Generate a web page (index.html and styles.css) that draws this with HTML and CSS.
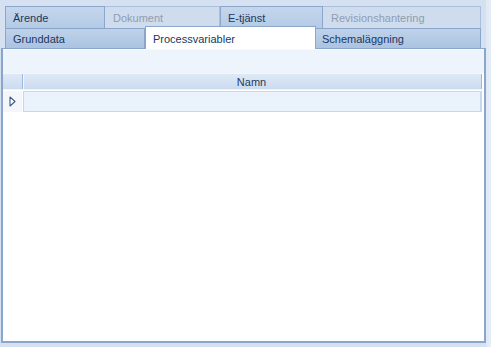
FILE: index.html
```html
<!DOCTYPE html>
<html lang="sv">
<head>
<meta charset="utf-8">
<link rel="stylesheet" href="styles.css">
</head>
<body>
<div class="window">
  <div class="tabs">
    <div class="tabrow row1">
      <div class="tab active w-arende">Ärende</div>
      <div class="tab disabled w-dok">Dokument</div>
      <div class="tab active w-etj">E-tjänst</div>
      <div class="tab disabled w-rev">Revisionshantering</div>
    </div>
    <div class="tabrow row2">
      <div class="tab tab2 w-grund">Grunddata</div>
      <div class="tab selected w-proc">Processvariabler</div>
      <div class="tab tab2 w-schema">Schemaläggning</div>
    </div>
  </div>
  <div class="panel">
    <div class="toolbar"></div>
    <div class="grid">
      <div class="grid-header">
        <div class="ind-head"></div>
        <div class="col-head">Namn</div>
      </div>
      <div class="grid-row">
        <div class="ind-cell">
          <svg class="tri" width="7" height="11" viewBox="0 0 7 11"><polygon points="1,1 1,10 6,5.5" fill="#ffffff" stroke="#3d5a82" stroke-width="1.1" stroke-linejoin="round"/></svg>
        </div>
        <div class="cell"></div>
      </div>
    </div>
  </div>
</div>
</body>
</html>
```

FILE: styles.css
```css
html, body {
  margin: 0;
  padding: 0;
}
body {
  background: #d5e1f1;
  font-family: "Liberation Sans", Arial, sans-serif;
  font-size: 11px;
  color: #1c3761;
  width: 491px;
  height: 347px;
  overflow: hidden;
}
.window {
  width: 491px;
  height: 347px;
  box-sizing: border-box;
  background: linear-gradient(to right, #d5e1f1 0, #d5e1f1 486px, #dfe8f5 486px, #e6eef8 491px);
}
.tabs {
  padding: 6px 0 0 5px;
}
.tabrow {
  display: flex;
}
.row1 {
  height: 22px;
}
.row2 {
  height: 20px;
}
.tab {
  box-sizing: border-box;
  display: flex;
  align-items: center;
  padding-left: 7px;
  border: 1px solid #8ea9cb;
  border-bottom: none;
  white-space: nowrap;
}
.row1 .tab {
  height: 22px;
}
.active {
  background: linear-gradient(#c4d6ec, #b4cae5);
  border-color: #8aa6ca;
  color: #1c3761;
}
.disabled {
  background: #cedcee;
  border-color: #a9bfdc;
  color: #8e9db2;
}
.tab2 {
  height: 20px;
  background: linear-gradient(#bfd2ea, #abc3e1);
  border-color: #8aa6ca;
}
.selected {
  height: 23px;
  margin-top: -2px;
  background: #ffffff;
  border-color: #8aa6ca;
  padding-top: 2px;
  position: relative;
  z-index: 2;
}
.w-arende { width: 100px; }
.w-dok { width: 115px; border-left: none; padding-left: 8px; }
.w-etj { width: 103px; }
.w-rev { width: 158px; border-left: none; padding-left: 8px; }
.w-grund { width: 140px; }
.w-proc { width: 171px; border-left: 1px solid #8aa6ca; }
.w-schema { width: 165px; border-left: none; padding-left: 6px; }

.panel {
  position: relative;
  z-index: 1;
  margin-left: 1px;
  width: 485px;
  height: 295px;
  box-sizing: border-box;
  border: 2px solid #8aa7cb;
  border-top: 1px solid #8aa6ca;
  box-shadow: inset 0 1px 0 #ffffff;
  background: #ffffff;
}
.toolbar {
  height: 23px;
  background: #eef4fc;
  border-top: 1px solid #f6f9fd;
}
.grid {
  width: 479px;
}
.grid-header {
  display: flex;
  height: 17px;
  background: linear-gradient(#dfe9f6, #cbdbef);
  border-top: 1px solid #f3f7fc;
  border-bottom: 1px solid #edf3fb;
  box-sizing: border-box;
}
.ind-head {
  width: 19px;
  border-right: 1px solid #9fb8d8;
  box-shadow: 1px 0 0 #f2f6fc;
}
.col-head {
  flex: 1;
  display: flex;
  align-items: center;
  justify-content: center;
  margin-left: 1px;
  border-right: 1px solid #9fb8d8;
  color: #1e3a5f;
  padding-right: 2px;
}
.grid-row {
  display: flex;
  height: 21px;
  margin-top: 1px;
}
.ind-cell {
  width: 19px;
  background: #f3f7fc;
  display: flex;
  align-items: center;
  padding-left: 6px;
  box-sizing: border-box;
}
.tri {
  display: block;
}
.cell {
  flex: 1;
  margin-left: 1px;
  background: #eaf2fb;
  border: 1px solid #c6d8ed;
  border-right-width: 2px;
}
```
